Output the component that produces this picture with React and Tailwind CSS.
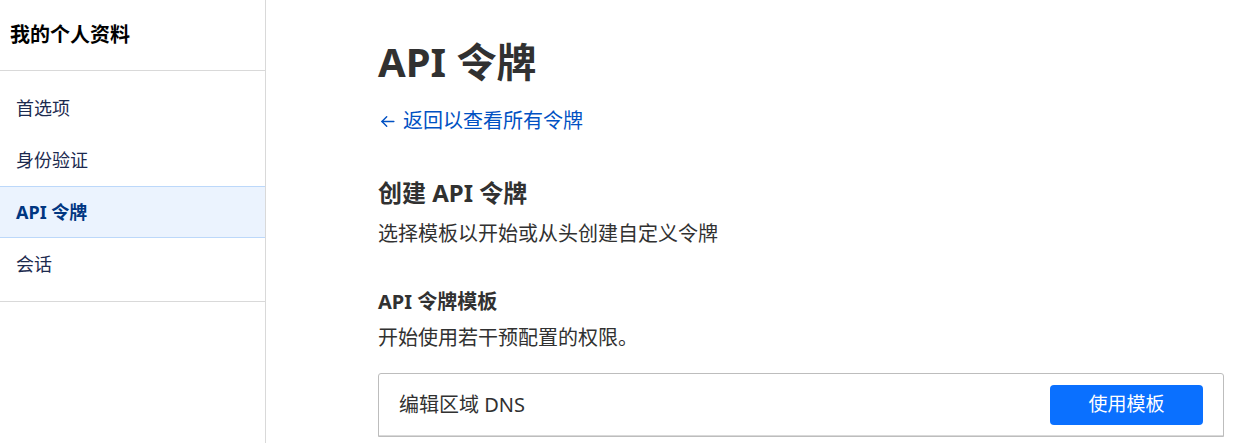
import React from "react";

const navItems = [
  { label: "首选项" },
  { label: "身份验证" },
  { label: "API 令牌", active: true },
  { label: "会话" },
];

const templates = ["编辑区域 DNS"];

export default function App() {
  return (
    <div className="flex h-[443px] w-[1234px] overflow-hidden bg-white font-['Noto_Sans','Noto_Sans_CJK_SC',sans-serif] text-[#313131]">
      {/* sidebar */}
      <aside className="w-[266px] shrink-0 border-r border-[#d9d9d9]">
        <div className="flex h-[71px] items-center border-b border-[#d9d9d9] px-[10px]">
          <h2 className="text-[20px] font-bold text-black">我的个人资料</h2>
        </div>
        <nav className="border-b border-[#d9d9d9] pb-[11px] pt-[11px]">
          {navItems.map((item) =>
            item.active ? (
              <div
                key={item.label}
                className="flex h-[52px] items-center border-y border-[#bcd8fa] bg-[#ebf3fe] px-4 text-[18px] font-bold text-[#003681]"
              >
                {item.label}
              </div>
            ) : (
              <div
                key={item.label}
                className="flex h-[52px] items-center border-y border-transparent px-4 text-[18px] text-[#1c2a4f]"
              >
                {item.label}
              </div>
            )
          )}
        </nav>
      </aside>

      {/* main */}
      <main className="flex-1 pl-[112px] pr-[10px] pt-[30px]">
        <h1 className="text-[40px] font-bold leading-[64px] text-[#313131]">API 令牌</h1>
        <a className="mt-[13px] flex items-center gap-[6px] text-[20px] leading-[28px] text-[#0051c3]">
          <svg width="19" height="19" viewBox="0 0 24 24" fill="none" stroke="currentColor" strokeWidth="1.8" strokeLinecap="round" strokeLinejoin="round">
            <path d="M20 12H5" />
            <path d="M11 6l-6 6 6 6" />
          </svg>
          返回以查看所有令牌
        </a>

        <h2 className="mt-[42px] text-[24px] font-bold leading-[32px]">创建 API 令牌</h2>
        <p className="mt-[11px] text-[20px] leading-[28px]">选择模板以开始或从头创建自定义令牌</p>

        <h3 className="mt-[40px] text-[20px] font-bold leading-[28px]">API 令牌模板</h3>
        <p className="mt-[8px] text-[20px] leading-[28px]">开始使用若干预配置的权限。</p>

        <div className="mt-[21px] rounded-t-[3px] border border-[#bdbdbd]">
          {templates.map((t) => (
            <div key={t} className="flex h-[62px] items-center justify-between border-b border-[#d9d9d9] pl-[20px] pr-[20px]">
              <span className="text-[20px] text-[#313131]">{t}</span>
              <button className="h-[40px] w-[153px] rounded-[4px] bg-[#0a70ff] text-[19px] text-white">
                使用模板
              </button>
            </div>
          ))}
        </div>
      </main>
    </div>
  );
}
